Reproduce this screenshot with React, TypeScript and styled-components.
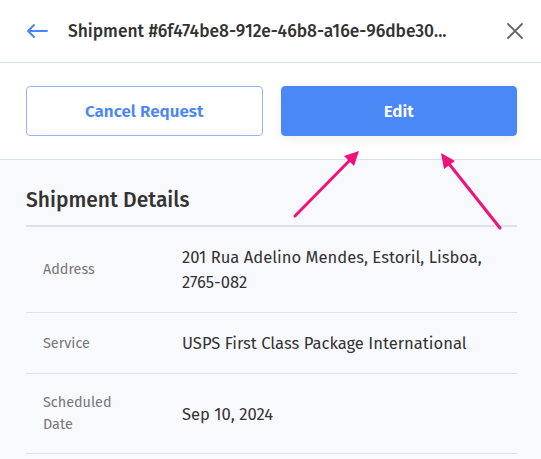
import React from 'react';
import styled, { createGlobalStyle } from 'styled-components';

const GlobalStyle = createGlobalStyle`
  body {
    margin: 0;
    background: #f8f9fd;
    font-family: 'Fira Sans', 'Open Sans', 'Noto Sans', sans-serif;
  }
`;

const Panel = styled.div`
  position: relative;
  width: 541px;
  min-height: 459px;
  background: #f8f9fd;
`;

const Header = styled.header`
  display: flex;
  align-items: center;
  height: 62px;
  padding: 0 18px 0 26px;
  background: #fff;
  border-bottom: 1px solid #dde1ea;
`;

const Title = styled.h1`
  flex: 1;
  margin: 0 0 0 20px;
  font-size: 17.4px;
  font-weight: 500;
  color: #333;
  white-space: nowrap;
`;

const IconButton = styled.button`
  display: flex;
  padding: 0;
  border: 0;
  background: none;
  cursor: pointer;
`;

const Actions = styled.div`
  display: grid;
  grid-template-columns: 1fr 1fr;
  gap: 18px;
  padding: 23px 24px 23px 26px;
  background: #fff;
  border-bottom: 1px solid #dde1ea;
`;

const Button = styled.button<{ $primary?: boolean }>`
  height: 50px;
  border-radius: 4px;
  border: 1px solid ${(p) => (p.$primary ? '#4a88f8' : '#94b6f8')};
  background: ${(p) => (p.$primary ? '#4a88f8' : '#fff')};
  color: ${(p) => (p.$primary ? '#fff' : '#4a86f7')};
  font-family: inherit;
  font-size: 17px;
  font-weight: 600;
  box-shadow: ${(p) => (p.$primary ? '0 4px 14px rgba(0, 0, 0, 0.06)' : 'none')};
`;

const Details = styled.section`
  padding: 27px 24px 0 26px;
`;

const SectionTitle = styled.h2`
  margin: 0;
  padding-bottom: 12px;
  font-size: 21px;
  line-height: 26px;
  font-weight: 500;
  color: #333;
  border-bottom: 2px solid #dde1ea;
`;

const Row = styled.div`
  display: grid;
  grid-template-columns: 139px 1fr;
  align-items: center;
  padding: 18px 0 17px 17px;
  border-bottom: 1px solid #dde1ea;
`;

const Label = styled.div`
  font-size: 14.4px;
  line-height: 22px;
  color: #777;
  padding-right: 40px;
`;

const Value = styled.div`
  font-size: 16.6px;
  line-height: 25px;
  color: #333;
`;

const Overlay = styled.svg`
  position: absolute;
  left: 0;
  top: 0;
  pointer-events: none;
`;

const rows = [
  { label: 'Address', value: '201 Rua Adelino Mendes, Estoril, Lisboa, 2765-082' },
  { label: 'Service', value: 'USPS First Class Package International' },
  { label: 'Scheduled Date', value: 'Sep 10, 2024' },
];

export default function App() {
  return (
    <Panel>
      <GlobalStyle />
      <Header>
        <IconButton aria-label="Back">
          <svg width="22" height="16" viewBox="0 0 22 16" fill="none" stroke="#4a86f7" strokeWidth="2" strokeLinecap="round" strokeLinejoin="round">
            <path d="M21 8H2M8 2L2 8l6 6" />
          </svg>
        </IconButton>
        <Title>Shipment #6f474be8-912e-46b8-a16e-96dbe30...</Title>
        <IconButton aria-label="Close">
          <svg width="16" height="16" viewBox="0 0 16 16" fill="none" stroke="#666" strokeWidth="1.8" strokeLinecap="round">
            <path d="M1 1l14 14M15 1L1 15" />
          </svg>
        </IconButton>
      </Header>
      <Actions>
        <Button>Cancel Request</Button>
        <Button $primary>Edit</Button>
      </Actions>
      <Details>
        <SectionTitle>Shipment Details</SectionTitle>
        {rows.map((r) => (
          <Row key={r.label}>
            <Label>{r.label}</Label>
            <Value>{r.value}</Value>
          </Row>
        ))}
      </Details>
      <Overlay width="541" height="459" viewBox="0 0 541 459">
        <g stroke="#f0127a" strokeWidth="3" strokeLinecap="round">
          <line x1="295" y1="216" x2="352" y2="158" />
          <line x1="500" y1="228" x2="446" y2="160" />
        </g>
        <g fill="#f0127a">
          <path d="M359 151l-15 5 10 10z" />
          <path d="M441 153l3 16 11-8z" />
        </g>
      </Overlay>
    </Panel>
  );
}
